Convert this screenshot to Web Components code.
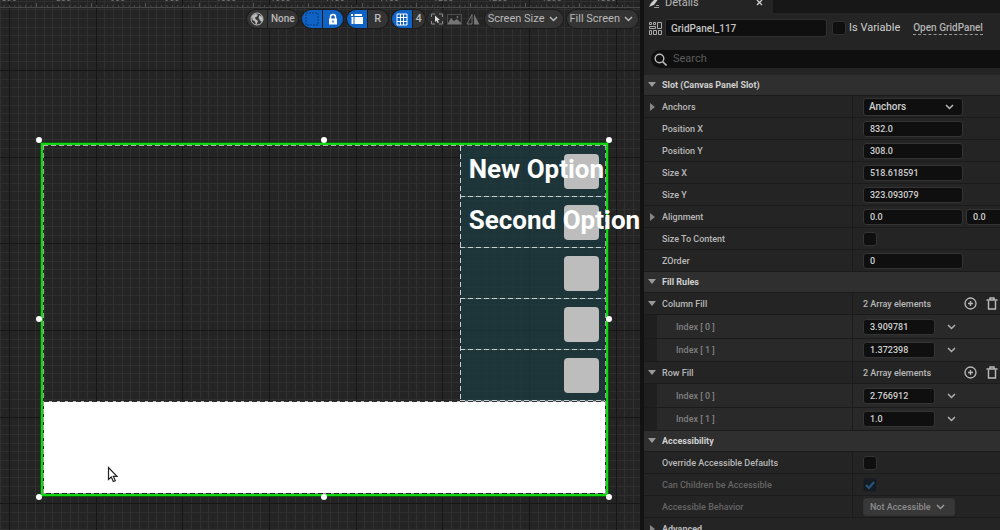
<!DOCTYPE html>
<html lang="en">
<head>
<meta charset="utf-8">
<title>Widget Designer</title>
<style>
  html, body { margin: 0; height: 100%; }
  body { font: 500 9px/12px Roboto, "Liberation Sans", sans-serif; color: #b8b8b8; background: #151515; overflow: hidden; }
  prop-row[kind=item] + prop-row[kind=item] { height: 23px; }
</style>
</head>
<body>
<widget-editor>
  <widget-designer slot="designer"></widget-designer>
  <details-panel slot="details">
    <prop-category heading="Slot (Canvas Panel Slot)">
      <prop-row label="Anchors" kind="select" value="Anchors" arrow="right"></prop-row>
      <prop-row label="Position X" kind="text" value="832.0"></prop-row>
      <prop-row label="Position Y" kind="text" value="308.0"></prop-row>
      <prop-row label="Size X" kind="text" value="518.618591"></prop-row>
      <prop-row label="Size Y" kind="text" value="323.093079"></prop-row>
      <prop-row label="Alignment" kind="pair" value="0.0" arrow="right"></prop-row>
      <prop-row label="Size To Content" kind="check"></prop-row>
      <prop-row label="ZOrder" kind="text" value="0"></prop-row>
    </prop-category>
    <prop-category heading="Fill Rules">
      <prop-row label="Column Fill" kind="array" value="2 Array elements" arrow="down"></prop-row>
      <prop-row label="Index [ 0 ]" kind="item" value="3.909781"></prop-row>
      <prop-row label="Index [ 1 ]" kind="item" value="1.372398"></prop-row>
      <prop-row label="Row Fill" kind="array" value="2 Array elements" arrow="down"></prop-row>
      <prop-row label="Index [ 0 ]" kind="item" value="2.766912"></prop-row>
      <prop-row label="Index [ 1 ]" kind="item" value="1.0"></prop-row>
    </prop-category>
    <prop-category heading="Accessibility">
      <prop-row label="Override Accessible Defaults" kind="check"></prop-row>
      <prop-row label="Can Children be Accessible" kind="check" checked disabled></prop-row>
      <prop-row label="Accessible Behavior" kind="select" value="Not Accessible" disabled></prop-row>
      <prop-row label="Advanced" kind="none" arrow="right" bold></prop-row>
    </prop-category>
  </details-panel>
</widget-editor>

<script>
const define = (name, html) => customElements.define(name, class extends HTMLElement {
  connectedCallback() {
    if (this.shadowRoot) return;
    const root = this.attachShadow({ mode: "open" });
    root.innerHTML = typeof html === "function" ? html(this) : html;
  }
});

const chevron = `<svg class="chev" width="9" height="6" viewBox="0 0 9 6" aria-hidden="true"><path d="M1 1l3.5 3.5L8 1" fill="none" stroke="currentColor" stroke-width="1.5"/></svg>`;

define("widget-editor", `
  <style>
    :host { display: grid; grid-template-columns: 64fr 36fr; height: 100vh; }
    ::slotted(*) { min-width: 0; min-height: 0; overflow: hidden; }
  </style>
  <slot name="designer"></slot><slot name="details"></slot>`);

/* Ruler along the top edge of the design surface */
define("designer-ruler", `
  <style>
    :host { display: grid; grid-template-columns: repeat(12, 1fr); height: 7px; margin: 0 7px 0 -18px; overflow: hidden; color: #7d7d7d; }
    span { display: flex; align-items: flex-end; justify-content: center; height: 7px;
      background: linear-gradient(90deg, #555 1px, transparent 1px) 0 100% / 100% 4px no-repeat,
        linear-gradient(90deg, #484848 1px, transparent 1px) 0 100% / 10% 2px repeat-x; }
    b { font: 9px/9px Roboto, sans-serif; margin-bottom: 4px; }
  </style>` + [800, 850, 900, 950, 1000, 1050, 1100, 1150, 1200, 1250, 1300, 1350].map(n => `<span><b>${n}</b></span>`).join(""));

define("designer-toolbar", `
  <style>
    :host { display: flex; justify-content: flex-end; align-items: center; gap: 2px; font-size: 11px; }
    div { display: flex; align-items: center; }
    button { display: flex; align-items: center; justify-content: center; height: 18px; min-width: 20px; padding: 0; border: 0;
      background: #343434; color: #b9b9b9; font: inherit; font-weight: 400; white-space: nowrap; }
    .pill { border-radius: 10px; border: 1px solid #1b1b1b; overflow: hidden; gap: 1px; background: #1b1b1b; }
    .on { background: #0f63c4; color: #fff; }
    .none { padding: 0 3px; font-size: 10px; font-weight: 500; }
    .snap, .four { font-weight: 500; }
    .four { min-width: 12px; }
    .tools button { min-width: 18px; background: transparent; color: #757575; }
    .tools .ring { border-radius: 50%; background: #2e2e2e; color: #aaa; }
    .menu { gap: 4px; padding: 0 5px 0 3px; }
  </style>
  <div class="pill">
    <button aria-label="Localization preview"><svg width="14" height="14" viewBox="0 0 14 14"><circle cx="7" cy="7" r="6" fill="none" stroke="#bbb"/><path d="M2 4l3-2 3 .5-1 2-2 1 .5 1.500L8 9l-1 2.500L6 13 5 9.500 2.500 8zM9.500 3l3 2 .5 3-1.500 2L10 8.500 8.500 6z" fill="#bbb"/></svg></button>
    <button class="none">None</button>
  </div>
  <div class="pill">
    <button class="on" aria-label="Show outlines"><svg width="14" height="14" viewBox="0 0 14 14"><rect x="1" y="1" width="12" height="12" fill="none" stroke="#0a3c80" stroke-dasharray="2 1"/></svg></button>
    <button class="on" aria-label="Respect locks"><svg width="12" height="13" viewBox="0 0 12 13"><path d="M3.500 6V4a2.500 2.500 0 0 1 5 0v2" fill="none" stroke="#fff" stroke-width="1.500"/><rect x="2" y="5.500" width="8" height="6" fill="#fff"/><path d="M6 7.500v2" stroke="#0f63c4" stroke-width="1.300"/></svg></button>
  </div>
  <div class="pill">
    <button class="on" aria-label="Flow direction"><svg width="14" height="14" viewBox="0 0 14 14"><path d="M1 2h2v2H1zM1.500 5h2v7h-2zM4.500 2H12v2H4.500zM4.500 5H13v7H4.500z" fill="#fff"/></svg></button>
    <button class="snap">R</button>
  </div>
  <div class="pill">
    <button class="on" aria-label="Grid snapping"><svg width="12" height="13" viewBox="0 0 12 13"><path d="M1 1h10v11H1zM4.500 1v11M7.500 1v11M1 4.500h10M1 8.500h10" fill="none" stroke="#fff"/></svg></button>
    <button class="four">4</button>
  </div>
  <div class="tools">
    <button class="ring" aria-label="Zoom to fit"><svg width="14" height="14" viewBox="0 0 14 14"><path d="M1.500 5V2H5M9 2h3.500v3M12.500 9v3H9M5 12H1.500V9" fill="none" stroke="#888"/><path d="M5 3.500l5 4.500-2.300.2 1.300 2.300-1.300.6-1.200-2.300L5 10z" fill="#ddd"/></svg></button>
    <button aria-label="Preview background"><svg width="15" height="13" viewBox="0 0 15 13"><path d="M.5 1.500h14v10H.5z" fill="none" stroke="#4c4c4c"/><path d="M1 10l3-5 3 3 3-2 4 4v1H1z" fill="currentColor"/><circle cx="10.500" cy="4" r="1" fill="currentColor"/></svg></button>
    <button aria-label="Mirror"><svg width="14" height="13" viewBox="0 0 14 13"><path d="M6 1.500V11H1z" fill="none" stroke="currentColor"/><path d="M8 1v10.500h5.500z" fill="currentColor"/></svg></button>
  </div>
  <div class="pill"><button class="menu">Screen Size ${chevron}</button></div>
  <div class="pill"><button class="menu">Fill Screen ${chevron}</button></div>`);

define("option-row", `
  <style>
    :host { display: grid; align-items: center; padding: 0 6px 0 9px; min-height: 0;
      background: repeating-linear-gradient(90deg, #c4cfcf 0 5px, #4b5f60 5px 8px) 0 100% / 100% 1px no-repeat; }
    button, span { grid-area: 1 / 1; }
    button { justify-self: end; width: 35px; height: 35px; padding: 0; border: 0; border-radius: 4px; background: #bdbdbd; }
    span { z-index: 1; justify-self: start; width: 0; font: bold 26px/30px Roboto, sans-serif; color: #fff; white-space: nowrap; margin-bottom: 4px; }
  </style>
  <button aria-label="Option toggle"></button><span><slot></slot></span>`);

define("widget-designer", `
  <style>
    :host { display: flex; flex-direction: column; position: relative; background-color: #242424;
      background-image:
        linear-gradient(90deg, #161616 1px, transparent 1px 87px, #161616 87px 88px, transparent 88px 173px, #161616 173px 174px, transparent 174px),
        linear-gradient(#161616 1px, transparent 1px 87px, #161616 87px 88px, transparent 88px 173px, #161616 173px 174px, transparent 174px),
        linear-gradient(90deg, #303030 1px, transparent 1px 9px, #303030 9px 10px, transparent 10px 17px, #303030 17px 18px, transparent 18px),
        linear-gradient(#2f2f2f 1px, transparent 1px 9px, #2f2f2f 9px 10px, transparent 10px 17px, #2f2f2f 17px 18px, transparent 18px);
      background-size: 260px 260px, 260px 260px, 26px 26px, 26px 26px;
      background-position: 9px 70px; }
    designer-ruler { flex: none; }
    .bar { border-top: 1px solid #484848; padding: 1px 1px 0 0; }
    .frame { flex: 1; min-height: 0; position: relative; display: grid; grid-template: 277fr 100fr / 392fr 137fr;
      margin: 114px 32px 34px 41px; border: 2px solid #10d810; box-shadow: 0 0 0 1px #0b5c0d; padding: 1px; }
    .frame::before { content: ""; position: absolute; inset: 0; pointer-events: none;
      background:
        repeating-linear-gradient(90deg, #b0b0b0 0 5px, #333 5px 8px) 0 0 / 100% 1px no-repeat,
        repeating-linear-gradient(90deg, #999 0 3px, #222 3px 8px) 0 100% / 100% 1px no-repeat,
        repeating-linear-gradient(#a0a0a0 0 5px, #222 5px 8px) 0 0 / 1px 100% no-repeat,
        repeating-linear-gradient(#a0a0a0 0 5px, #222 5px 8px) 100% 0 / 1px 100% no-repeat; }
    .options { grid-area: 1 / 2; display: grid; grid-auto-rows: 1fr; min-width: 0; min-height: 0;
      background: repeating-linear-gradient(#c4cfcf 0 5px, transparent 5px 8px) 0 0 / 1px 100% no-repeat, rgba(27, 58, 61, .78); }
    .blank { grid-area: 2 / 1 / 3 / 3; background: repeating-linear-gradient(90deg, #333 0 5px, #bbb 5px 8px) 0 0 / 100% 1px no-repeat, #fff; }
    i { position: absolute; width: 6px; height: 6px; border-radius: 50%; background: #fff; }
    .t { top: -8px } .b { bottom: -6px } .l { left: -7px } .r { right: -6px }
    .m { left: calc(50% - 4px) } .c { top: calc(50% - 4px) }
    .cursor { position: absolute; left: 11%; top: 92%; }
  </style>
  <designer-ruler></designer-ruler>
  <div class="bar"><designer-toolbar></designer-toolbar></div>
  <div class="frame">
    <div class="options">
      <option-row>New Option</option-row><option-row>Second Option</option-row>
      <option-row></option-row><option-row></option-row><option-row></option-row>
    </div>
    <div class="blank"></div>
    <i class="t l"></i><i class="t m"></i><i class="t r"></i><i class="c l"></i><i class="c r"></i><i class="b l"></i><i class="b m"></i><i class="b r"></i>
    <svg class="cursor" width="14" height="18" viewBox="-2 0 14 18"><path d="M1.500 1.500v12l2.800-2.500 2 4.500 2-.9-2-4.300h3.700z" fill="#fff" stroke="#222" stroke-width="1.200"/></svg>
  </div>`);

define("details-panel", `
  <style>
    :host { display: flex; flex-direction: column; border-left: 4px solid #121212; background: #242424; }
    .tabs { display: flex; flex: none; height: 21px; margin-top: -8px; background: #171717; }
    .tab { display: flex; align-items: center; width: 129px; box-sizing: border-box; padding: 0 10px 0 4px; gap: 5px; background: #242424; font-size: 11px; font-weight: 400; }
    .tab span { flex: 1; }
    button { padding: 0; border: 0; background: none; color: #ccc; display: flex; }
    .name { display: flex; align-items: center; flex: none; height: 30px; padding-left: 5px; }
    .name > svg { margin-right: 3px; flex: none; }
    input { font: 10px/12px Roboto, sans-serif; color: #c4c4c4; background: #0f0f0f; border: 1px solid #303030; border-radius: 3px; box-sizing: border-box; outline: 0; }
    .name input[type=text] { width: 162px; height: 18px; padding: 0 5px; font-weight: 500; }
    input[type=checkbox] { appearance: none; width: 14px; height: 14px; margin: 0 3px 0 5px; flex: none; }
    label, a { font-size: 11px; font-weight: 400; color: #d0d0d0; white-space: nowrap; }
    a { font-size: 10px; font-weight: 500; margin-left: 13px; color: #b4b4b4; text-decoration: none; border-bottom: 1px dashed #999; line-height: 12px; }
    .search { display: flex; flex: none; align-items: center; height: 18px; margin: 7px -10px 7px 7px; padding-left: 3px; gap: 6px;
      background: #0f0f0f; border-radius: 9px; box-sizing: border-box; }
    .search input { flex: 1; min-width: 0; border: 0; background: none; font-size: 11px; padding: 0; }
    ::placeholder { color: #5c5c5c; opacity: 1; }
  </style>
  <div class="tabs"><div class="tab">
    <svg width="12" height="13" viewBox="0 0 12 13"><path d="M1 11l2-4 6-6 2 1-5 7-3 1z" fill="#ccc"/><path d="M6 11.500h5M8 9.500h3" stroke="#999"/></svg>
    <span>Details</span>
    <button aria-label="Close tab"><svg width="7" height="7" viewBox="0 0 7 7"><path d="M1 1l5 5M6 1L1 6" stroke="#ccc" stroke-width="1.400"/></svg></button>
  </div></div>
  <div class="name">
    <svg width="13" height="13" viewBox="0 0 13 13" fill="none" stroke="#aaa"><path d="M.5.500h2v2h-2zM4.500.500h2v2h-2zM8.500.500h4v6h-4zM.5 4.500h6v2h-6zM.5 8.500h2v4h-2zM4.500 8.500h3v4h-3zM9.500 8.500h3v4h-3z"/></svg>
    <input type="text" value="GridPanel_117" aria-label="Widget name">
    <input type="checkbox" id="var"><label for="var">Is Variable</label>
    <a href="#">Open GridPanel</a>
  </div>
  <div class="search">
    <svg width="13" height="13" viewBox="0 0 13 13"><circle cx="5.500" cy="5.500" r="4.300" fill="none" stroke="#bbb" stroke-width="1.400"/><path d="M8.700 8.700L12.500 12.500" stroke="#bbb" stroke-width="1.600"/></svg>
    <input type="search" placeholder="Search" aria-label="Search details">
  </div>
  <slot></slot>`);

const arrows = {
  down: `<svg width="8" height="6" viewBox="0 0 8 6"><path d="M0 0h8L4 5z" fill="#999"/></svg>`,
  right: `<svg width="8" height="8" viewBox="0 0 8 8"><path d="M2 0v8l5-4z" fill="#858585"/></svg>`
};

define("prop-category", el => `
  <style>
    :host { display: block; flex: none; }
    h2 { display: flex; align-items: center; height: 20px; margin: 0; padding-left: 4px; background: #2f2f2f;
      font: bold 9px/12px Roboto, sans-serif; color: #cfcfcf; border-bottom: 1px solid #1b1b1b; }
    svg { width: 8px; margin-right: 6px; }
  </style>
  <h2>${arrows.down}${el.getAttribute("heading")}</h2><slot></slot>`);

define("prop-row", el => {
  const kind = el.getAttribute("kind"), value = el.getAttribute("value") || "", label = el.getAttribute("label");
  const off = el.hasAttribute("disabled") ? "disabled" : "";
  const control = {
    text: `<input id="v" type="text" value="${value}">`,
    pair: `<input id="v" type="text" value="${value}"><input type="text" value="${value}" aria-label="${label} Y">`,
    item: `<input id="v" type="text" value="${value}"><button aria-label="Item options">${chevron}</button>`,
    check: `<input id="v" type="checkbox" ${el.hasAttribute("checked") ? "checked" : ""} ${off}>`,
    select: `<div class="combo"><select id="v" ${off}><option>${value}</option></select>${chevron}</div>`,
    array: `<output id="v">${value}</output>
      <button aria-label="Add element"><svg width="13" height="13" viewBox="0 0 13 13" fill="none" stroke="#bbb"><circle cx="6.500" cy="6.500" r="5.500" stroke-width="1.300"/><path d="M6.500 4v5M4 6.500h5" stroke-width="1.300"/></svg></button>
      <button aria-label="Remove all elements"><svg width="12" height="13" viewBox="0 0 12 13" fill="none" stroke="#bbb" stroke-width="1.400"><path d="M.5 3h11M4 2.500V1h4v1.500M2.500 4v8h7V4"/></svg></button>`,
    none: ""
  }[kind];
  return `
  <style>
    :host { display: grid; grid-template-columns: 587fr 413fr; height: 22px; box-sizing: border-box; border-bottom: 1px solid #1b1b1b; background: #242424; }
    :host([kind=item]) { height: 24px; background: linear-gradient(90deg, #1f1f1f 13px, #292929 13px); }
    .name, .value { display: flex; align-items: center; min-width: 0; }
    .name { border-right: 1px solid #1b1b1b; padding-left: 4px; }
    :host([kind=item]) .name { padding-left: 18px; color: #808080; }
    :host([kind=none]) .name { border: 0; }
    :host([disabled]) { color: #646464; }
    :host([bold]) { font-weight: bold; }
    .arrow { width: 14px; flex: none; display: flex; }
    .value { padding-left: 10px; }
    input, select { box-sizing: border-box; margin: 0; font: 500 9px/12px Roboto, sans-serif; color: #cfcfcf; background: #0f0f0f; border: 1px solid #343434; border-radius: 3px; outline: 0; }
    input[type=text] { flex: none; width: 100px; height: 16px; padding: 0 6px; }
    :host([kind=pair]) input { margin-right: 3px; }
    :host([kind=item]) input { width: 72px; }
    :host([kind=item]) button { margin-left: 12px; }
    input[type=checkbox] { appearance: none; width: 14px; height: 14px; }
    input:checked { border-color: #202020; background: #141b22 url("data:image/svg+xml,%3Csvg xmlns='http://www.w3.org/2000/svg' viewBox='0 0 12 12'%3E%3Cpath d='M2 6l3 3 5-6' fill='none' stroke='%232a5580' stroke-width='2'/%3E%3C/svg%3E"); }
    .combo { display: grid; align-items: center; width: 100px; }
    .combo > * { grid-area: 1 / 1; }
    .combo select { appearance: none; width: 100%; height: 18px; padding: 0 5px; font-size: 10px; opacity: 1; }
    .combo .chev { justify-self: end; margin-right: 9px; pointer-events: none; }
    :host([disabled]) .combo { width: 92px; }
    :host([disabled]) select { font-size: 9px; background: #383838; color: #8c8c8c; padding: 0 6px; }
    :host([disabled]) .chev { color: #999; margin-right: 10px; }
    button { padding: 0; border: 0; background: none; color: #b0b0b0; display: flex; }
    output { width: 101px; flex: none; }
    output + button { margin-right: 9px; }
  </style>
  <div class="name"><span class="arrow">${arrows[el.getAttribute("arrow")] || ""}</span>${kind === "none" ? `<span>${label}</span>` : `<label for="v">${label}</label>`}</div>
  <div class="value">${control}</div>`;
});
</script>
</body>
</html>
